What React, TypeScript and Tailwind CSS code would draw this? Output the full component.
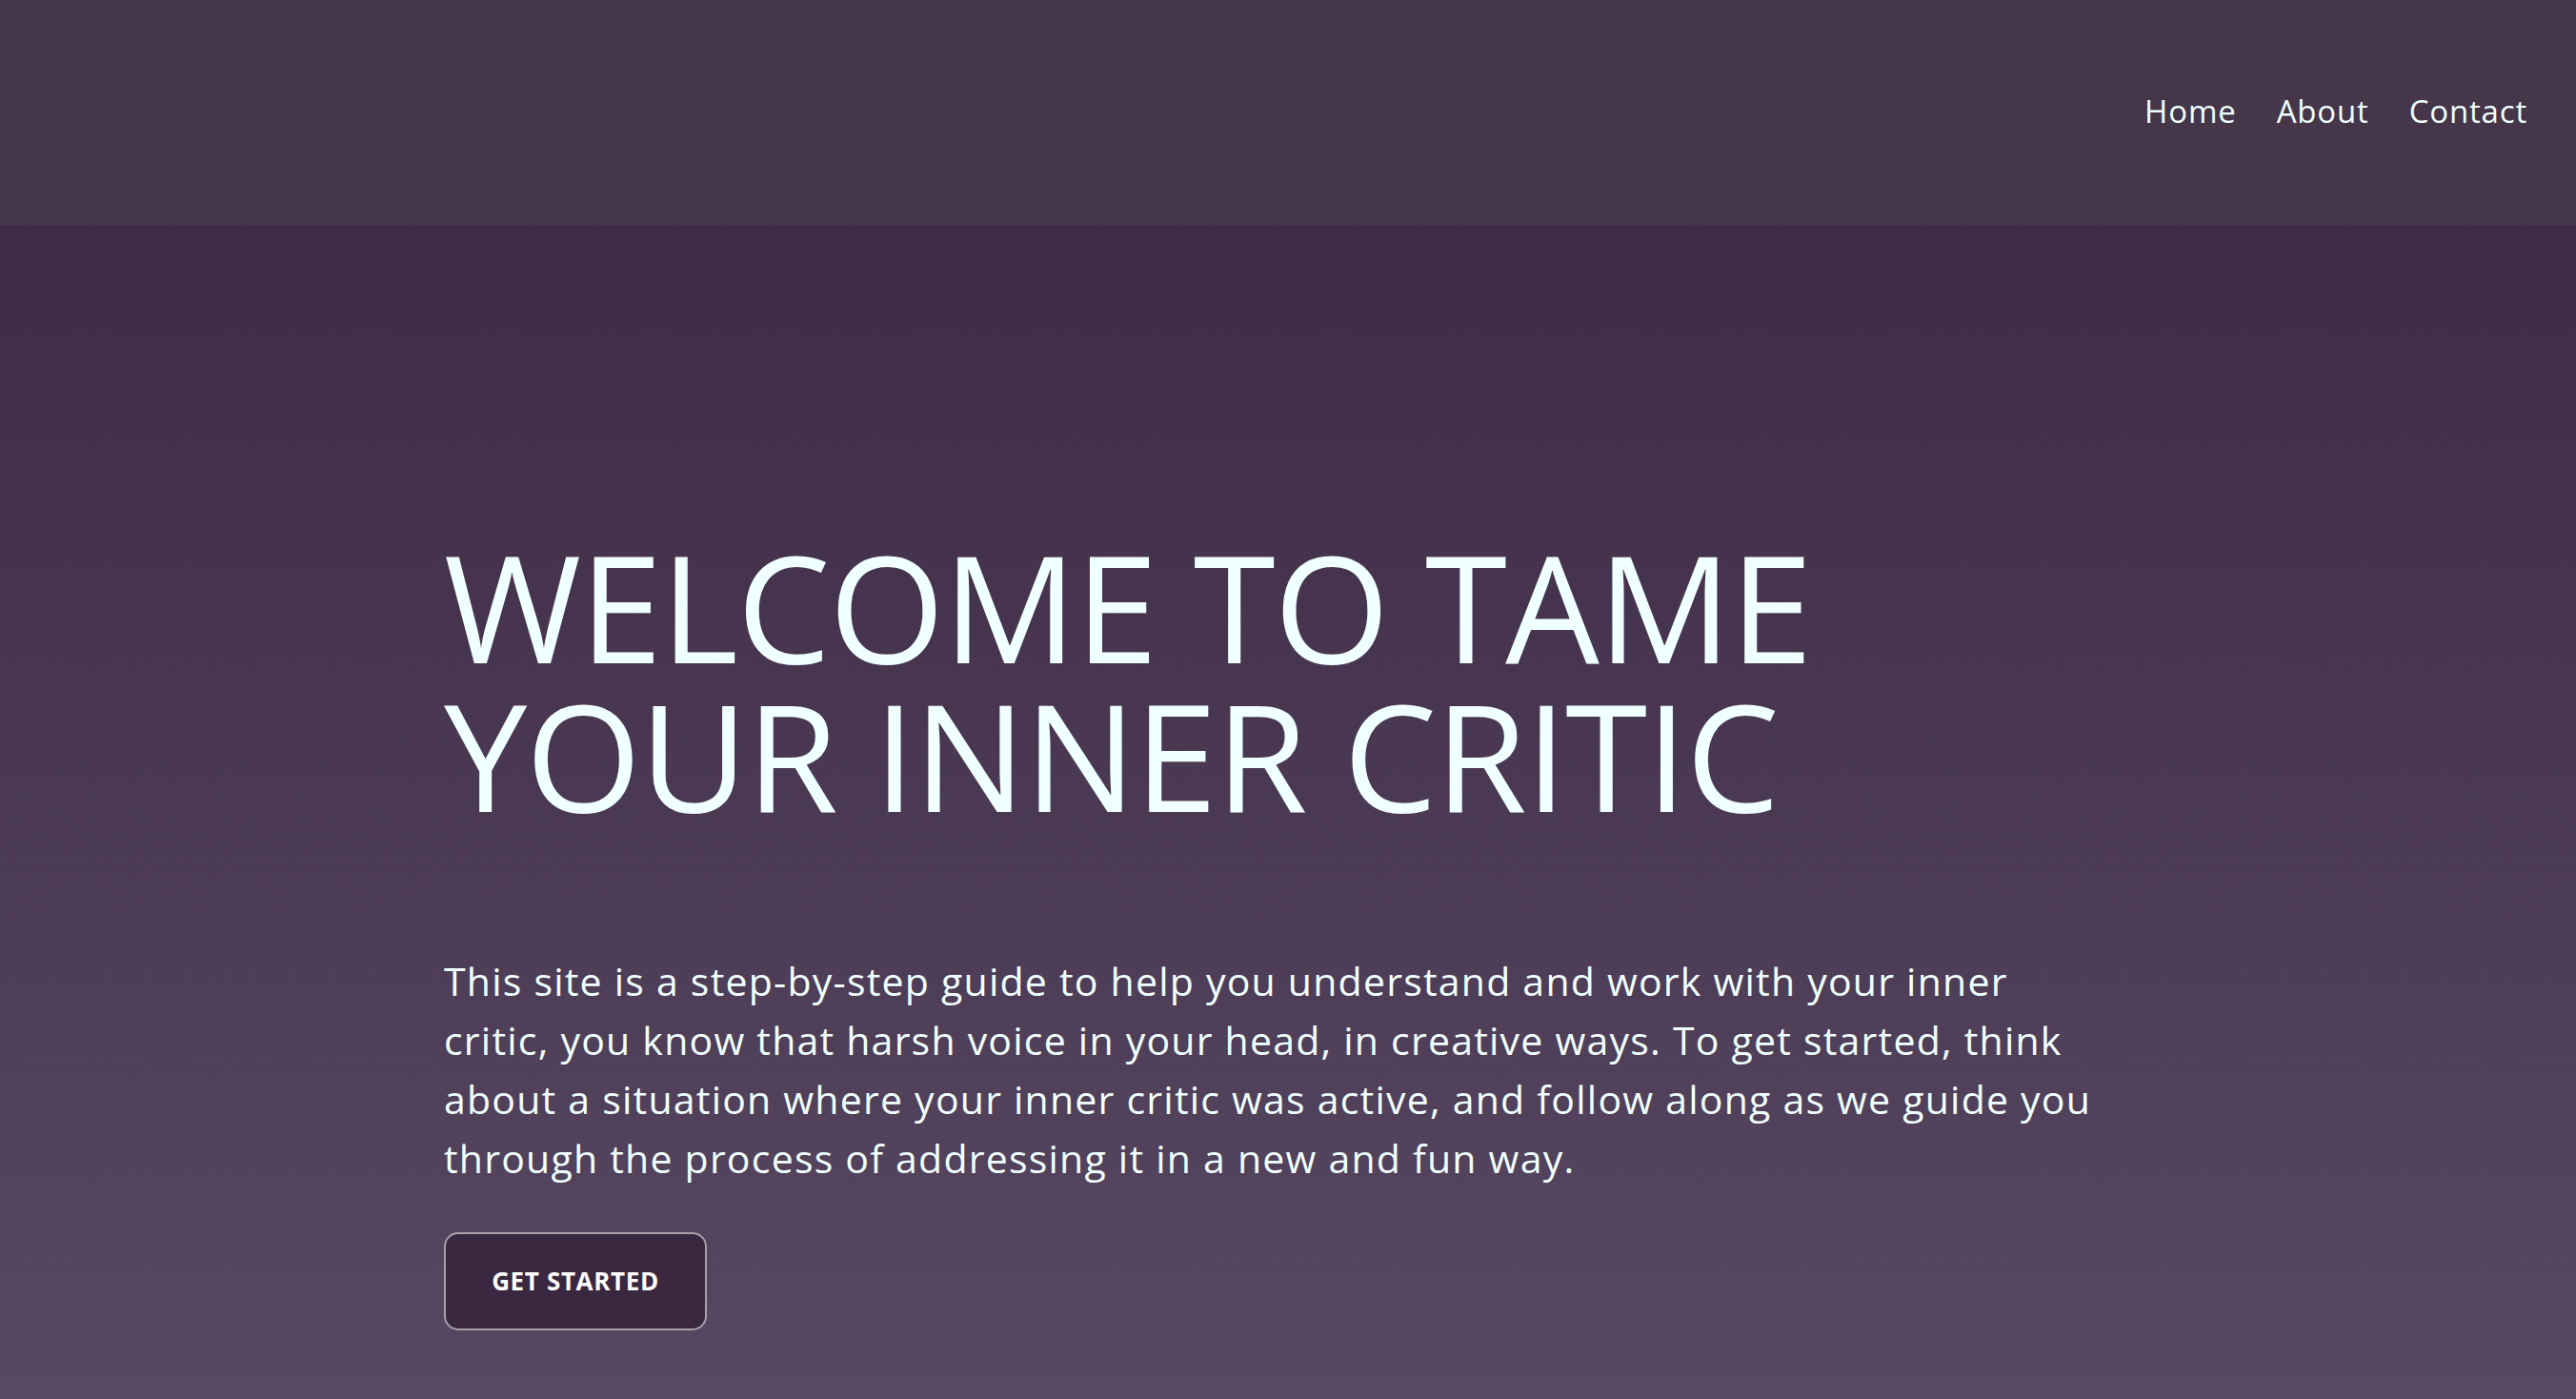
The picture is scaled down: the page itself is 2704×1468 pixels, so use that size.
import React from "react";

const links = ["Home", "About", "Contact"];

const App = () => {
  return (
    <div className="h-screen flex flex-col bg-[#45364a] font-['Open_Sans',sans-serif] text-[#f0ffff] overflow-hidden">
      {/* Nav */}
      <header className="h-[236px] shrink-0 bg-[#45364a] flex justify-end items-start pt-[100px] pr-[51px]">
        <nav className="flex gap-[42px] text-[33px] leading-none tracking-[0.025em]">
          {links.map((item) => (
            <a key={item} href="#" className="hover:underline">
              {item}
            </a>
          ))}
        </nav>
      </header>

      {/* Hero */}
      <section className="flex-1 bg-gradient-to-b from-[#3e2b45] to-[#584862] pl-[466px] pt-[322px]">
        <h1 className="text-[156px] leading-[156px] font-normal tracking-[-0.01em] uppercase">
          Welcome to tame
          <br />
          your inner critic
        </h1>
        <p className="mt-[128px] max-w-[1750px] text-[41px] leading-[62px] font-normal tracking-[0.03em]">
          This site is a step-by-step guide to help you understand and work with your inner
          critic, you know that harsh voice in your head, in creative ways. To get started, think
          about a situation where your inner critic was active, and follow along as we guide you
          through the process of addressing it in a new and fun way.
        </p>
        <button className="mt-[47px] w-[276px] h-[103px] rounded-[15px] border-2 border-[#a89fa9] bg-[#3a2841] text-[26px] font-bold tracking-wide text-white">
          GET STARTED
        </button>
      </section>
    </div>
  );
};

export default App;
